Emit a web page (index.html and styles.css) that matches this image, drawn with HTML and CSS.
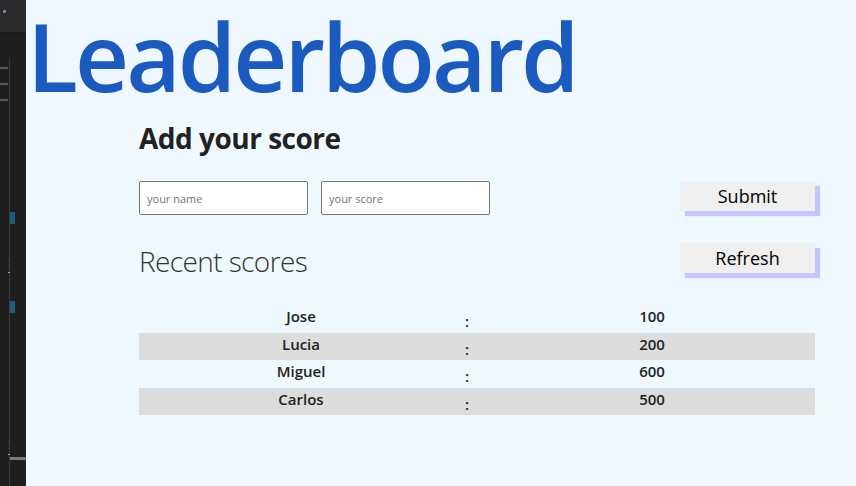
FILE: index.html
```html
<!DOCTYPE html>
<html lang="en">
<head>
<meta charset="utf-8">
<title>Leaderboard</title>
<link rel="stylesheet" href="styles.css">
</head>
<body>
<aside class="editor-strip">
  <div class="strip-top"><span class="strip-dot"></span></div>
  <span class="mark mark-a"></span>
  <span class="mark mark-b"></span>
  <span class="mark mark-c"></span>
  <span class="gutter"></span>
  <span class="block block-1"></span>
  <span class="block block-2"></span>
  <span class="red r1"></span><span class="red r2"></span><span class="red r3 orange"></span>
  <span class="red r4"></span><span class="red r5"></span><span class="red r6 orange"></span>
  <span class="scroll"></span>
</aside>
<main class="page">
  <h1 class="title">Leaderboard</h1>
  <section class="content">
    <h2 class="add-title">Add your score</h2>
    <form class="score-form">
      <input class="field" type="text" placeholder="your name">
      <input class="field" type="text" placeholder="your score">
      <button class="btn btn-submit" type="button">Submit</button>
    </form>
    <div class="recent-head">
      <h2 class="recent-title">Recent scores</h2>
      <button class="btn" type="button">Refresh</button>
    </div>
    <div class="scores">
      <div class="row"><span class="name">Jose</span><span class="sep">:</span><span class="score">100</span></div>
      <div class="row alt"><span class="name">Lucia</span><span class="sep">:</span><span class="score">200</span></div>
      <div class="row"><span class="name">Miguel</span><span class="sep">:</span><span class="score">600</span></div>
      <div class="row alt"><span class="name">Carlos</span><span class="sep">:</span><span class="score">500</span></div>
    </div>
  </section>
</main>
</body>
</html>
```
FILE: styles.css
```css
* { box-sizing: border-box; }
html, body { margin: 0; height: 100%; }
body {
  display: flex;
  font-family: "Open Sans", "Noto Sans", sans-serif;
  background: #f0f8ff;
  color: #222;
  overflow: hidden;
}
.editor-strip {
  position: relative;
  width: 26px;
  flex: 0 0 26px;
  background: #1f1f1f;
  height: 486px;
}
.strip-top {
  height: 33px;
  background: #2a2a2a;
  border-bottom: 1px solid #1a1a1a;
}
.strip-dot {
  position: absolute;
  left: 3px; top: 10px;
  width: 3px; height: 3px;
  background: #6c8fd0;
  border-radius: 1px;
}
.mark {
  position: absolute;
  left: 0;
  width: 8px; height: 2px;
  background: #6b5446;
}
.mark-a { top: 67px; }
.mark-b { top: 83px; }
.mark-c { top: 99px; }
.gutter {
  position: absolute;
  left: 9px; top: 59px; bottom: 0;
  width: 1px;
  background: #3c3c3c;
}
.block {
  position: absolute;
  left: 10px;
  width: 5px; height: 12px;
  background: #1d5c7b;
}
.block-1 { top: 212px; }
.block-2 { top: 301px; }
.red {
  position: absolute;
  left: 8px;
  width: 1px; height: 1px;
  background: #8a1f1f;
}
.orange { background: #d88a4a; width: 2px; }
.r1 { top: 260px; } .r2 { top: 265px; } .r3 { top: 272px; }
.r4 { top: 441px; } .r5 { top: 448px; } .r6 { top: 454px; }
.scroll {
  position: absolute;
  left: 10px; top: 457px;
  width: 16px; height: 3px;
  background: #7a7a7a;
}
.page {
  flex: 1;
  min-width: 0;
}
.title {
  margin: 0 0 0 1px;
  font-size: 94px;
  line-height: 113px;
  font-weight: 600;
  letter-spacing: -3px;
  color: #1b5abe;
  white-space: nowrap;
}
.content {
  margin-left: 113px;
  width: 676px;
}
.add-title {
  margin: 7px 0 0;
  font-size: 28px;
  line-height: 36px;
  font-weight: 700;
  letter-spacing: -0.5px;
  color: #222;
}
.score-form {
  display: flex;
  align-items: flex-start;
  gap: 13px;
  margin: 25px 0 0;
}
.field {
  width: 169px;
  height: 34px;
  border: 1px solid #767676;
  border-radius: 2px;
  background: #fff;
  padding: 0 7px;
  font-family: inherit;
  font-size: 11px;
  color: #222;
}
.field::placeholder { color: #757575; }
.btn {
  width: 135px;
  height: 30px;
  border: none;
  background: #efefef;
  box-shadow: 5px 5px 1px #c6c6ff;
  font-family: inherit;
  font-size: 18px;
  color: #000;
  padding: 0;
  line-height: 30px;
}
.btn-submit { margin-left: auto; }
.recent-head {
  display: flex;
  justify-content: space-between;
  align-items: flex-start;
  margin-top: 28px;
}
.recent-title {
  margin: 0;
  font-size: 28px;
  line-height: 36px;
  font-weight: 300;
  letter-spacing: -0.6px;
  color: #333;
}
.scores {
  margin-top: 26px;
}
.row {
  display: grid;
  grid-template-columns: 324px 26px 1fr;
  height: 27.5px;
  line-height: 22px;
  font-size: 15px;
  font-weight: 600;
  color: #222;
}
.row.alt { background: #dcdcdc; }
.name, .score { text-align: center; }
.sep {
  padding-left: 2px;
  position: relative;
  top: 5px;
}
```
